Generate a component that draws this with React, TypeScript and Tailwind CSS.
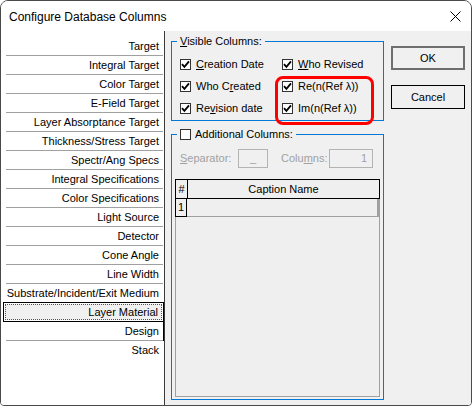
import React from "react";

const font = { fontFamily: '"Liberation Sans", Arial, sans-serif' };

function Check() {
  return (
    <svg width="9" height="9" viewBox="0 0 9 9">
      <path d="M1 4.2 L3.4 6.8 L8 1.4" stroke="#000" strokeWidth="1.8" fill="none" />
    </svg>
  );
}

function Checkbox({ checked }: { checked?: boolean }) {
  return (
    <span className="w-[11px] h-[11px] border border-[#333] bg-white flex items-center justify-center shrink-0">
      {checked && <Check />}
    </span>
  );
}

function CheckItem({ label }: { label: React.ReactNode }) {
  return (
    <div className="h-[22px] flex items-center gap-[5px]">
      <Checkbox checked />
      <span>{label}</span>
    </div>
  );
}

const items = [
  "Target",
  "Integral Target",
  "Color Target",
  "E-Field Target",
  "Layer Absorptance Target",
  "Thickness/Stress Target",
  "Spectr/Ang Specs",
  "Integral Specifications",
  "Color Specifications",
  "Light Source",
  "Detector",
  "Cone Angle",
  "Line Width",
];

export default function App() {
  return (
    <div
      className="relative w-[472px] h-[406px] bg-white border border-[#4a4a4a] rounded-t-[8px] rounded-b-[4px] overflow-hidden flex flex-col text-[11px] text-black"
      style={font}
    >
      <div className="h-[30px] shrink-0 flex items-center pl-[8px] pr-[10px] bg-white">
        <span className="text-[12px] flex-1 pt-[1px]">Configure Database Columns</span>
        <svg width="11" height="11" viewBox="0 0 11 11">
          <path d="M0.5 0.5 L10.5 10.5 M10.5 0.5 L0.5 10.5" stroke="#000" strokeWidth="1" />
        </svg>
      </div>
      <div className="flex-1 flex min-h-0">
        <div className="w-[164px] shrink-0 bg-white border-r border-[#3a3a3a] pt-[6px] flex flex-col">
          {items.map((t) => (
            <div
              key={t}
              className="h-[19px] ml-[5px] mr-[1px] border-b border-[#a0a0a0] flex items-center justify-end pr-[4px]"
            >
              {t}
            </div>
          ))}
          <div className="h-[18px] ml-[5px] mr-[1px] flex items-center justify-end pr-[4px]">
            Substrate/Incident/Exit Medium
          </div>
          <div className="h-[20px] ml-[2px] border border-black p-[1px]">
            <div className="h-full border border-dotted border-[#555] bg-[#f0f0f0] flex items-center justify-end pr-[3px]">
              Layer Material
            </div>
          </div>
          <div className="h-[19px] ml-[2px] border-r border-black">
            <div className="h-full ml-[3px] border-b border-[#a0a0a0] flex items-center justify-end pr-[4px]">
              Design
            </div>
          </div>
          <div className="h-[19px] ml-[5px] mr-[1px] flex items-center justify-end pr-[4px]">Stack</div>
        </div>
        <div className="flex-1 bg-[#f0f0f0] flex pl-[6px]">
          <div className="w-[213px] flex flex-col pt-[10px] pb-[5px]">
            <div className="relative h-[80px] border border-[#0078d7] pt-[11px] pl-[8px] grid grid-cols-[102px_1fr]">
              <span className="absolute left-[5px] top-[-8px] px-[3px] bg-[#f0f0f0] leading-[14px]">
                <u>V</u>isible Columns:
              </span>
              <div className="flex flex-col">
                <CheckItem label={<><u>C</u>reation Date</>} />
                <CheckItem label={<>Who C<u>r</u>eated</>} />
                <CheckItem label={<>Re<u>v</u>ision date</>} />
              </div>
              <div className="flex flex-col">
                <CheckItem label={<><u>W</u>ho Revised</>} />
                <CheckItem label="Re(n(Ref λ))" />
                <CheckItem label="Im(n(Ref λ))" />
              </div>
            </div>
            <div className="relative mt-[13px] flex-1 border border-[#0078d7] flex flex-col pt-[14px] pb-[2px]">
              <span className="absolute left-[5px] top-[-8px] px-[3px] bg-[#f0f0f0] flex items-center gap-[4px] leading-[14px]">
                <Checkbox />
                <span>Additional Columns:</span>
              </span>
              <div className="flex items-center h-[19px] pl-[8px] text-[#a0a0a0]">
                <span className="w-[58px]">
                  <u>S</u>eparator:
                </span>
                <span className="w-[30px] h-[19px] border border-[#b4b4b4] flex items-center justify-center">_</span>
                <span className="ml-[13px] w-[48px]">
                  Colu<u>m</u>ns:
                </span>
                <span className="w-[44px] h-[19px] border border-[#b4b4b4] flex items-center justify-end pr-[5px]">1</span>
              </div>
              <div className="flex-1 mt-[11px] mx-[3px] border border-[#a0a0a0] bg-[#efefef] flex flex-col">
                <div className="flex h-[20px] border border-black -m-[1px] mb-0">
                  <div className="w-[12px] border-r border-black flex items-center justify-center">#</div>
                  <div className="flex-1 flex items-center justify-center">Caption Name</div>
                </div>
                <div className="flex h-[18px]">
                  <div className="w-[12px] -ml-[1px] border border-t-0 border-black flex items-center justify-center">1</div>
                  <div className="flex-1 border-b border-r-2 border-[#a0a0a0]"></div>
                </div>
              </div>
            </div>
          </div>
          <div className="ml-[7px] w-[74px] flex flex-col pt-[15px] gap-[15px]">
            <div className="h-[24px] border-2 border-[#6e6e6e] flex items-center justify-center">OK</div>
            <div className="h-[24px] border border-black flex items-center justify-center">Cancel</div>
          </div>
        </div>
      </div>
      <div className="absolute left-[274px] top-[75px] w-[99px] h-[49px] border-[3px] border-[#ff0000] rounded-[8px]" />
    </div>
  );
}
